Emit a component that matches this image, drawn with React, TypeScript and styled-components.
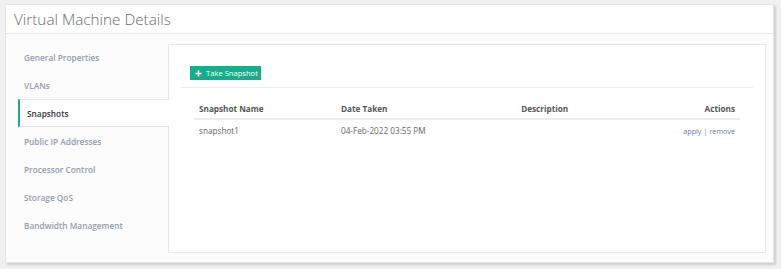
import React from 'react';
import styled, { createGlobalStyle } from 'styled-components';

const GlobalStyle = createGlobalStyle`
  html, body {
    margin: 0;
    padding: 0;
    background: #f1f1f1;
    font-family: "Open Sans", "Liberation Sans", sans-serif;
  }
`;

const Page = styled.div`
  width: 781px;
  height: 269px;
  padding: 4px 7px 0 5px;
  box-sizing: border-box;
`;

const Panel = styled.div`
  background: #fff;
  height: 259px;
  box-shadow: 2px 2px 2px rgba(0, 0, 0, 0.15);
  border: 1px solid #e6e6e6;
  box-sizing: border-box;
  display: flex;
  flex-direction: column;
`;

const Header = styled.div`
  height: 28px;
  border-bottom: 1px solid #e8e8e8;
  display: flex;
  align-items: center;
  padding-left: 8px;
  font-size: 15.3px;
  color: #6b6b6b;
  font-weight: 300;
`;

const Body = styled.div`
  flex: 1;
  display: flex;
  padding: 10px 7px 9px 12px;
  background: #fcfcfc;
`;

const Sidebar = styled.div`
  width: 150px;
  display: flex;
  flex-direction: column;
  margin-top: -1px;
`;

const NavItem = styled.div<{ $active?: boolean }>`
  height: 28px;
  display: flex;
  align-items: center;
  box-sizing: border-box;
  font-size: 8.3px;
  font-weight: 600;
  padding-left: ${p => (p.$active ? '7px' : '4px')};
  color: ${p => (p.$active ? '#333' : '#929baa')};
  background: ${p => (p.$active ? '#fff' : 'transparent')};
  border-left: ${p => (p.$active ? '2px solid #1aab8a' : '2px solid transparent')};
  border-top: 1px solid ${p => (p.$active ? '#e4e4e4' : 'transparent')};
  border-bottom: 1px solid ${p => (p.$active ? '#e4e4e4' : 'transparent')};
  margin-right: ${p => (p.$active ? '-1px' : '0')};
  position: relative;
`;

const Card = styled.div`
  flex: 1;
  background: #fff;
  border: 1px solid #e6e6e6;
  padding: 21px 12px 0 12px;
`;

const Toolbar = styled.div`
  display: flex;
  padding: 0 0 7px 9px;
  border-bottom: 1px solid #ececec;
`;

const Button = styled.button`
  display: flex;
  align-items: center;
  gap: 4px;
  height: 14px;
  padding: 0 3px 0 5px;
  border: none;
  background: #1aab8a;
  color: #fff;
  font-family: inherit;
  font-size: 7.6px;
  font-weight: 400;
`;

const Table = styled.table`
  margin: 15px 13px 0 13px;
  width: calc(100% - 26px);
  border-collapse: collapse;
  font-size: 8.2px;
`;

const Th = styled.th<{ $right?: boolean }>`
  text-align: ${p => (p.$right ? 'right' : 'left')};
  font-weight: 700;
  color: #555;
  padding: 0 5px 4px 5px;
  border-bottom: 2px solid #ececec;
`;

const Td = styled.td<{ $right?: boolean }>`
  text-align: ${p => (p.$right ? 'right' : 'left')};
  color: #666;
  padding: 5px 5px 6px 5px;
`;

const Link = styled.a`
  color: #5a7ea6;
  font-size: 7.2px;
  text-decoration: none;
`;

const Sep = styled.span`
  color: #5a7ea6;
  font-size: 7.2px;
  margin: 0 2px;
`;

const navItems = [
  'General Properties',
  'VLANs',
  'Snapshots',
  'Public IP Addresses',
  'Processor Control',
  'Storage QoS',
  'Bandwidth Management',
];

const App = () => {
  return (
    <Page>
      <GlobalStyle />
      <Panel>
        <Header>Virtual Machine Details</Header>
        <Body>
          <Sidebar>
            {navItems.map(item => (
              <NavItem key={item} $active={item === 'Snapshots'}>
                {item}
              </NavItem>
            ))}
          </Sidebar>
          <Card>
            <Toolbar>
              <Button>
                <svg width="7" height="7" viewBox="0 0 7 7">
                  <path d="M3.5 0.5v6M0.5 3.5h6" stroke="#fff" strokeWidth="1.6" />
                </svg>
                Take Snapshot
              </Button>
            </Toolbar>
            <Table>
              <thead>
                <tr>
                  <Th style={{ width: '26%' }}>Snapshot Name</Th>
                  <Th style={{ width: '33%' }}>Date Taken</Th>
                  <Th>Description</Th>
                  <Th $right>Actions</Th>
                </tr>
              </thead>
              <tbody>
                <tr>
                  <Td>snapshot1</Td>
                  <Td>04-Feb-2022 03:55 PM</Td>
                  <Td></Td>
                  <Td $right>
                    <Link href="#">apply</Link>
                    <Sep>|</Sep>
                    <Link href="#">remove</Link>
                  </Td>
                </tr>
              </tbody>
            </Table>
          </Card>
        </Body>
      </Panel>
    </Page>
  );
};

export default App;
